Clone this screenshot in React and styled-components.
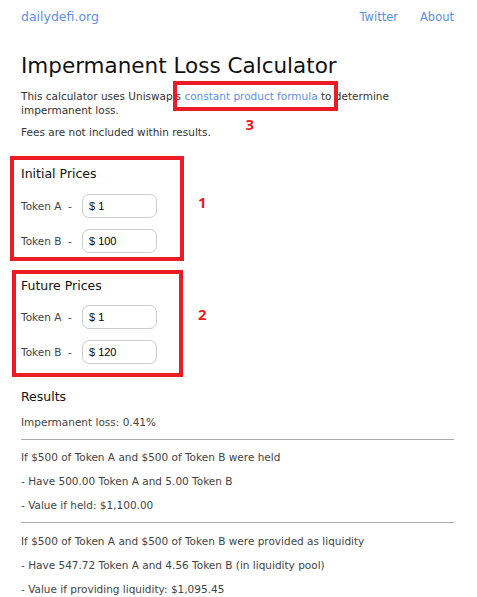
import React from 'react';
import styled, { createGlobalStyle } from 'styled-components';

const GlobalStyle = createGlobalStyle`
  body {
    margin: 0;
    background: #fff;
    font-family: 'DejaVu Sans', 'Open Sans', sans-serif;
    color: #333;
  }
`;

const Page = styled.div`
  padding: 0 23px 0 21px;
`;

const Nav = styled.nav`
  display: flex;
  align-items: center;
  justify-content: space-between;
  height: 33px;
  font-size: 12px;
`;

const NavLinks = styled.div`
  display: flex;
  gap: 22px;
`;

const NavLink = styled.a`
  color: #5b8ef0;
  text-decoration: none;
  font-size: ${(p) => (p.$brand ? '12.5px' : '11.5px')};
`;

const Title = styled.h1`
  margin: 19px 0 0;
  font-size: 21.5px;
  font-weight: 400;
  color: #111;
  line-height: 28px;
`;

const Text = styled.p`
  margin: ${(p) => p.$margin || '0'};
  font-size: 10.5px;
  line-height: 14px;
  color: #333;
`;

const Marked = styled.span`
  position: relative;
`;

const InlineLink = styled.a`
  color: #5b8ef0;
  text-decoration: none;
`;

const Annotation = styled.span`
  position: absolute;
  left: -11px;
  right: -20px;
  top: -9px;
  bottom: -9px;
  border: 4px solid #ed1c24;
  pointer-events: none;
`;

const Badge = styled.span`
  position: absolute;
  color: #ed1c24;
  font-family: 'Open Sans', sans-serif;
  font-weight: 700;
  font-size: 15px;
  left: ${(p) => p.$left};
  top: ${(p) => p.$top};
`;

const Section = styled.section`
  position: relative;
  width: ${(p) => p.$width};
  margin: ${(p) => p.$margin} 0 0 ${(p) => p.$shift};
  padding: ${(p) => p.$padTop} 0 ${(p) => p.$padBottom} ${(p) => p.$pad};
  border: 4px solid #ed1c24;
`;

const Heading = styled.h2`
  margin: 0;
  font-size: 12.5px;
  font-weight: 400;
  color: #111;
  line-height: 20px;
`;

const Row = styled.div`
  display: flex;
  align-items: center;
  margin-top: ${(p) => p.$top};
`;

const Label = styled.span`
  width: 61px;
  font-size: 10.5px;
  color: #444;
`;

const PriceBox = styled.label`
  display: flex;
  align-items: center;
  width: 61px;
  height: 22px;
  padding: 0 6px;
  border: 1px solid #ccc;
  border-radius: 7px;
  font-family: 'Liberation Sans', Arial, sans-serif;
  font-size: 11px;
  color: #111;
`;

const PriceInput = styled.input`
  width: 40px;
  border: none;
  outline: none;
  padding: 0 0 0 3px;
  font-family: inherit;
  font-size: 11px;
  color: #000;
  background: transparent;
`;

const Results = styled.div`
  margin-top: 10px;
`;

const Rule = styled.hr`
  margin: 10px 0 0;
  border: none;
  border-top: 1px solid #aaa;
`;

const Line = styled.p`
  margin: ${(p) => p.$top} 0 0;
  font-size: 10.5px;
  line-height: 14px;
  color: #444;
`;

const Price = ({ label, value, top }) => (
  <Row $top={top}>
    <Label>{label} &nbsp;-</Label>
    <PriceBox>
      $<PriceInput defaultValue={value} />
    </PriceBox>
  </Row>
);

export default function App() {
  return (
    <>
      <GlobalStyle />
      <Page>
        <Nav>
          <NavLink $brand href="#">dailydefi.org</NavLink>
          <NavLinks>
            <NavLink href="#">Twitter</NavLink>
            <NavLink href="#">About</NavLink>
          </NavLinks>
        </Nav>
        <Title>Impermanent Loss Calculator</Title>
        <Text $margin="9px 0 0">
          This calculator uses Uniswap's{' '}
          <Marked>
            <InlineLink href="#">constant product formula</InlineLink>
            <Annotation />
            <Badge $left="61px" $top="27px">3</Badge>
          </Marked>{' '}
          to determine impermanent loss.
        </Text>
        <Text $margin="8px 0 0">Fees are not included within results.</Text>

        <Section $margin="17px" $shift="-11px" $pad="7px" $width="159px" $padTop="4px" $padBottom="4px">
          <Heading>Initial Prices</Heading>
          <Price label="Token A" value="1" top="10px" />
          <Price label="Token B" value="100" top="11px" />
          <Badge $left="184px" $top="32px">1</Badge>
        </Section>

        <Section $margin="9px" $shift="-9px" $pad="5px" $width="158px" $padTop="2px" $padBottom="9px">
          <Heading>Future Prices</Heading>
          <Price label="Token A" value="1" top="9px" />
          <Price label="Token B" value="120" top="11px" />
          <Badge $left="182px" $top="30px">2</Badge>
        </Section>

        <Results>
          <Heading>Results</Heading>
          <Line $top="8px">Impermanent loss: 0.41%</Line>
          <Rule />
          <Line $top="10px">If $500 of Token A and $500 of Token B were held</Line>
          <Line $top="10px">- Have 500.00 Token A and 5.00 Token B</Line>
          <Line $top="10px">- Value if held: $1,100.00</Line>
          <Rule />
          <Line $top="11px">If $500 of Token A and $500 of Token B were provided as liquidity</Line>
          <Line $top="10px">- Have 547.72 Token A and 4.56 Token B (in liquidity pool)</Line>
          <Line $top="10px">- Value if providing liquidity: $1,095.45</Line>
        </Results>
      </Page>
    </>
  );
}
